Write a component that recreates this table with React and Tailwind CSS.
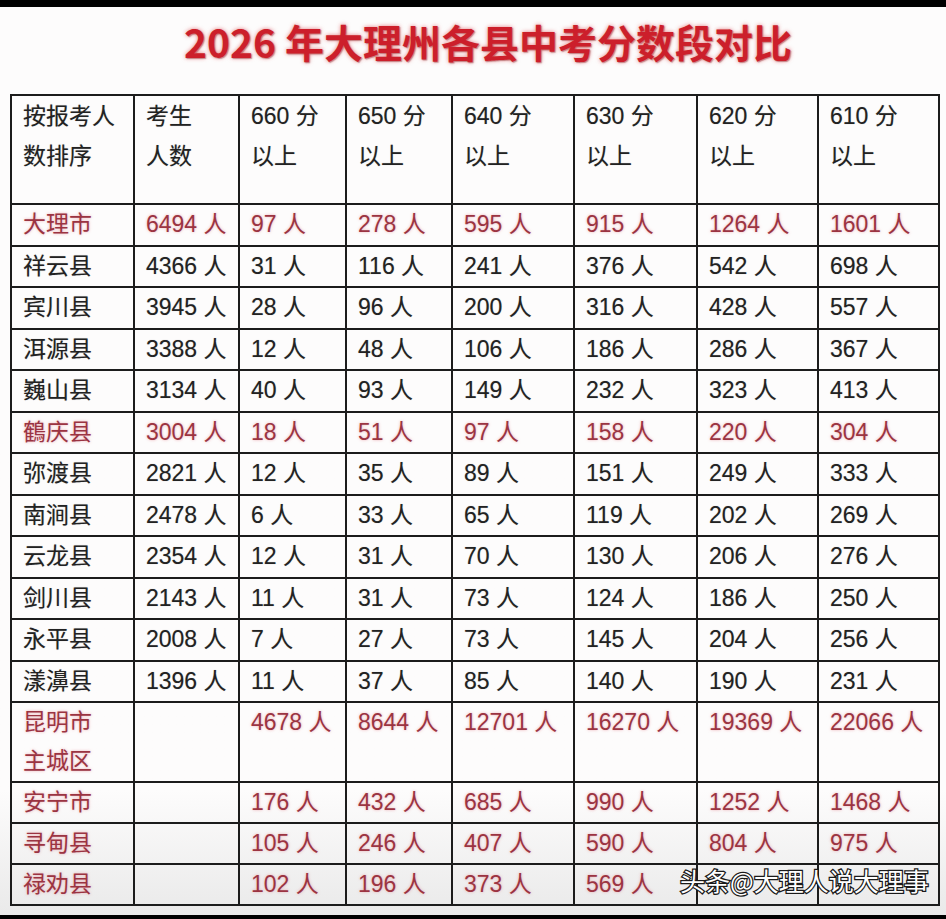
const rows = [
  { name: "大理市", total: "6494 人", v: ["97 人", "278 人", "595 人", "915 人", "1264 人", "1601 人"], red: true },
  { name: "祥云县", total: "4366 人", v: ["31 人", "116 人", "241 人", "376 人", "542 人", "698 人"] },
  { name: "宾川县", total: "3945 人", v: ["28 人", "96 人", "200 人", "316 人", "428 人", "557 人"] },
  { name: "洱源县", total: "3388 人", v: ["12 人", "48 人", "106 人", "186 人", "286 人", "367 人"] },
  { name: "巍山县", total: "3134 人", v: ["40 人", "93 人", "149 人", "232 人", "323 人", "413 人"] },
  { name: "鶴庆县", total: "3004 人", v: ["18 人", "51 人", "97 人", "158 人", "220 人", "304 人"], red: true },
  { name: "弥渡县", total: "2821 人", v: ["12 人", "35 人", "89 人", "151 人", "249 人", "333 人"] },
  { name: "南涧县", total: "2478 人", v: ["6 人", "33 人", "65 人", "119 人", "202 人", "269 人"] },
  { name: "云龙县", total: "2354 人", v: ["12 人", "31 人", "70 人", "130 人", "206 人", "276 人"] },
  { name: "剑川县", total: "2143 人", v: ["11 人", "31 人", "73 人", "124 人", "186 人", "250 人"] },
  { name: "永平县", total: "2008 人", v: ["7 人", "27 人", "73 人", "145 人", "204 人", "256 人"] },
  { name: "漾濞县", total: "1396 人", v: ["11 人", "37 人", "85 人", "140 人", "190 人", "231 人"] },
];

// the last two values of 禄劝县 sit under the watermark and can't be read
const outside = [
  { name: ["昆明市", "主城区"], v: ["4678 人", "8644 人", "12701 人", "16270 人", "19369 人", "22066 人"], h: "h-[79px]" },
  { name: ["安宁市"], v: ["176 人", "432 人", "685 人", "990 人", "1252 人", "1468 人"], h: "h-[40px]" },
  { name: ["寻甸县"], v: ["105 人", "246 人", "407 人", "590 人", "804 人", "975 人"], h: "h-[39px]" },
  { name: ["禄劝县"], v: ["102 人", "196 人", "373 人", "569 人", "", ""], h: "h-[40px]" },
];

const scores = ["660", "650", "640", "630", "620", "610"];

const cell = "border-2 border-[#1c1c1c] pl-[11px] align-top leading-[38px] whitespace-nowrap";
const red = "text-[#9b3442] [text-shadow:0_0_3px_rgba(225,120,130,0.6)]";
const black = "text-[#222] [text-shadow:0_0_1px_rgba(0,0,0,0.3)]";

export default function App() {
  return (
    <div
      className="relative w-[946px] h-[919px] flex flex-col bg-linear-to-b from-[#fdfcfc] from-[86%] to-[#e9e9e9] overflow-hidden"
      style={{ fontFamily: '"Liberation Sans", "Noto Sans CJK SC", sans-serif' }}
    >
      <div className="h-[7px] bg-black shrink-0" />

      <h1
        className="mt-[13px] pl-[30px] text-center text-[39px] leading-[42px] font-bold text-[#cc1f2b] [text-shadow:0_0_4px_rgba(210,20,30,0.55),1px_1px_1px_rgba(90,0,0,0.35)]"
        style={{ fontFamily: '"Noto Sans CJK SC", sans-serif' }}
      >
        2026 年大理州各县中考分数段对比
      </h1>

      <table className="mt-[32px] ml-[10px] w-[928px] table-fixed border-collapse text-[23px]">
        <colgroup>
          <col className="w-[123px]" />
          <col className="w-[105px]" />
          <col className="w-[107px]" />
          <col className="w-[106px]" />
          <col className="w-[122px]" />
          <col className="w-[123px]" />
          <col className="w-[121px]" />
          <col className="w-[121px]" />
        </colgroup>
        <thead>
          <tr className="h-[109px]">
            <th className={`${cell} ${black} font-normal text-left leading-[40px]`}>
              按报考人
              <br />
              数排序
            </th>
            <th className={`${cell} ${black} font-normal text-left leading-[40px]`}>
              考生
              <br />
              人数
            </th>
            {scores.map((s) => (
              <th key={s} className={`${cell} ${black} font-normal text-left leading-[40px]`}>
                {s} 分
                <br />
                以上
              </th>
            ))}
          </tr>
        </thead>
        <tbody>
          {rows.map((r) => {
            const tone = r.red ? red : black;
            return (
              <tr key={r.name} className="h-[41.5px]">
                <td className={`${cell} ${tone}`}>{r.name}</td>
                <td className={`${cell} ${tone}`}>{r.total}</td>
                {r.v.map((x, i) => (
                  <td key={i} className={`${cell} ${tone}`}>
                    {x}
                  </td>
                ))}
              </tr>
            );
          })}
          {outside.map((r) => (
            <tr key={r.name[0]} className={r.h}>
              <td className={`${cell} ${red} leading-[39px]`}>
                {r.name.map((n) => (
                  <div key={n}>{n}</div>
                ))}
              </td>
              <td className={cell} />
              {r.v.map((x, i) => (
                <td key={i} className={`${cell} ${red}`}>
                  {x}
                </td>
              ))}
            </tr>
          ))}
        </tbody>
      </table>

      <div className="mt-auto h-[4px] bg-black shrink-0" />

      {/* platform watermark over the last row */}
      <div
        className="absolute left-[680px] top-[866px] text-[25px] leading-[28px] text-white [-webkit-text-stroke:2.5px_#1a1a1a] [paint-order:stroke_fill] whitespace-nowrap"
        style={{ fontFamily: '"Noto Sans CJK SC", sans-serif' }}
      >
        头条@大理人说大理事
      </div>
    </div>
  );
}
